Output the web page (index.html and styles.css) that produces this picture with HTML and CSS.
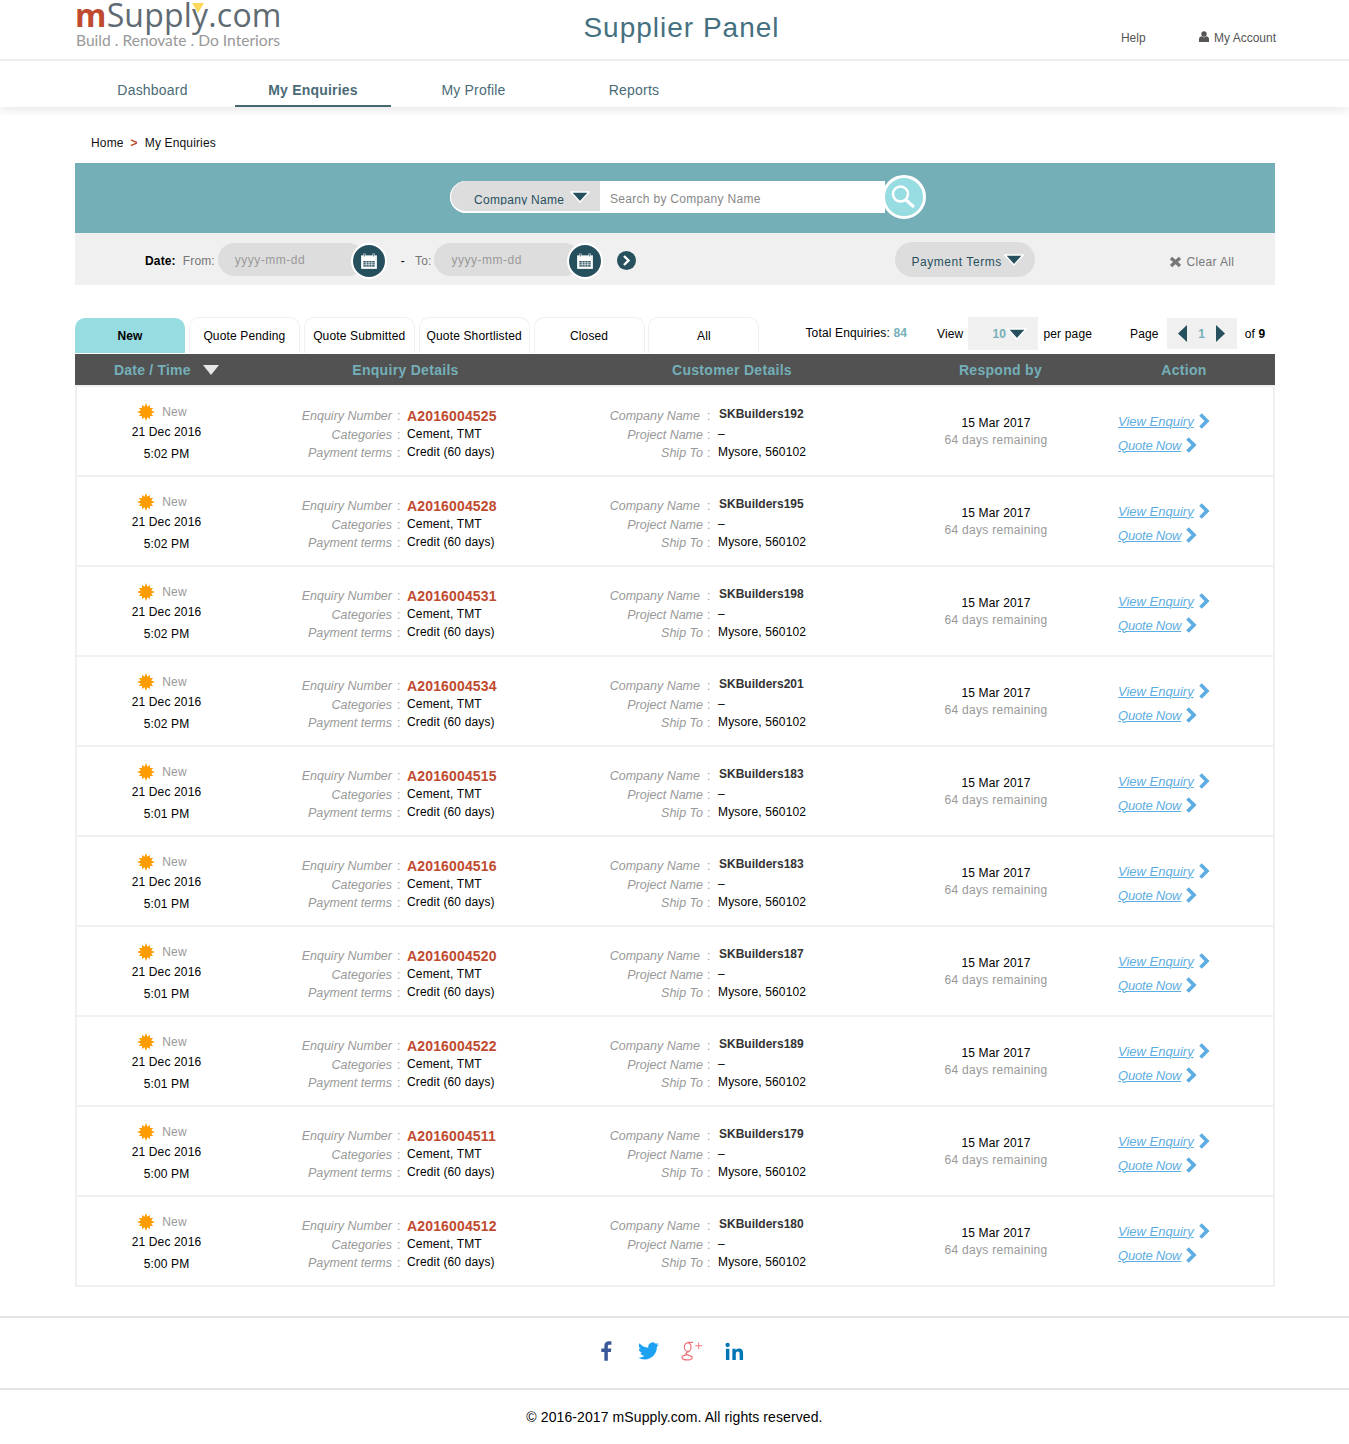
FILE: index.html
```html
<!DOCTYPE html>
<html lang="en">
<head>
    <meta charset="UTF-8">
    <title>Supplier Panel</title>
    <link rel="stylesheet" href="styles.css">
</head>
<body>

<!-- Shared icons -->
<svg class="icon-defs" width="0" height="0" aria-hidden="true">
    <symbol id="sun" viewBox="0 0 18 18">
        <polygon points="9,0 10.4,3.8 13,1.9 13,5 16.1,5 14.2,7.6 18,9 14.2,10.4 16.1,13 13,13 13,16.1 10.4,14.2 9,18 7.6,14.2 5,16.1 5,13 1.9,13 3.8,10.4 0,9 3.8,7.6 1.9,5 5,5 5,1.9 7.6,3.8" fill="#ff9c00"/>
    </symbol>
    <symbol id="chevron" viewBox="0 0 12 16">
        <polyline points="2.5,1.5 9,8 2.5,14.5" fill="none" stroke="#5dade2" stroke-width="3.6"/>
    </symbol>
    <symbol id="calendar" viewBox="0 0 16 16">
        <path d="M1 3h14v12H1z" fill="#fff"/>
        <path d="M4 1v4M12 1v4" stroke="#fff" stroke-width="1.6"/>
        <path d="M4 1v3M12 1v3" stroke="#27505e" stroke-width=".6"/>
        <path d="M3 8h10v5H3z" fill="#27505e"/>
        <path d="M3 9.6h10M3 11.3h10M5.5 8v5M8 8v5M10.5 8v5" stroke="#fff" stroke-width=".6"/>
    </symbol>
    <symbol id="caret" viewBox="0 0 20 12">
        <polygon points="1,1 19,1 10,11" fill="#27505e" stroke="#fff" stroke-width="1.4"/>
    </symbol>
</svg>

<!-- Header -->
<header class="top">
    <div class="logo">
        <div class="logo-name"><span class="logo-m">m</span>Supply.com</div>
        <div class="logo-tag">Build . Renovate . Do Interiors</div>
        <i class="logo-mark"></i>
    </div>
    <h1 class="panel-title">Supplier Panel</h1>
    <div class="top-links">
        <a class="help">Help</a>
        <a class="account">
            <svg width="10" height="11" viewBox="0 0 10 11"><circle cx="5" cy="3" r="2.7" fill="#555"/><path d="M0 11V8c0-1.6 1.4-2.6 3-2.8l2 1.2 2-1.2c1.600.2 3 1.200 3 2.800v3z" fill="#555"/></svg>
            My Account
        </a>
    </div>
</header>

<nav class="nav">
    <a class="nav-item">Dashboard</a>
    <a class="nav-item active">My Enquiries</a>
    <a class="nav-item">My Profile</a>
    <a class="nav-item">Reports</a>
</nav>

<div class="breadcrumb">Home <span class="crumb-sep">&gt;</span> My Enquiries</div>

<main class="content">

    <!-- Search -->
    <section class="search-band">
        <div class="search-box">
            <div class="search-type">
                <span class="search-type-text">Company Name</span>
                <svg class="caret"><use href="#caret"/></svg>
            </div>
            <div class="search-input">Search by Company Name</div>
            <div class="search-btn">
                <svg width="28" height="28" viewBox="0 0 28 28"><circle cx="12.5" cy="13" r="7.5" fill="none" stroke="#fff" stroke-width="2.5"/><path d="M18 19l8 7" stroke="#fff" stroke-width="3"/></svg>
            </div>
        </div>
    </section>

    <!-- Filters -->
    <section class="filter-band">
        <b class="date-label">Date:</b>
        <span class="from-label">From:</span>
        <div class="date-pill">yyyy-mm-dd<span class="cal"><svg width="18" height="18"><use href="#calendar"/></svg></span></div>
        <span class="dash">-</span>
        <span class="to-label">To:</span>
        <div class="date-pill">yyyy-mm-dd<span class="cal"><svg width="18" height="18"><use href="#calendar"/></svg></span></div>
        <span class="go-btn"><svg width="9" height="11" viewBox="0 0 9 11"><polyline points="2,1 6.500,5.500 2,10" fill="none" stroke="#fff" stroke-width="2.400"/></svg></span>
        <div class="terms-pill">Payment Terms<svg class="caret"><use href="#caret"/></svg></div>
        <div class="clear-all">
            <svg width="13" height="12" viewBox="0 0 13 12"><path d="M2 2l9 8M11 2l-9 8" stroke="#777" stroke-width="3.200"/></svg>
            Clear All
        </div>
    </section>

    <!-- Tabs and paging -->
    <section class="tab-bar">
        <a class="tab current">New</a>
        <a class="tab">Quote Pending</a>
        <a class="tab">Quote Submitted</a>
        <a class="tab">Quote Shortlisted</a>
        <a class="tab">Closed</a>
        <a class="tab">All</a>
        <div class="total">Total Enquiries: <span class="total-num">84</span></div>
        <div class="view-label">View</div>
        <div class="view-select"><span>10</span><svg class="caret"><use href="#caret"/></svg></div>
        <div class="per-page">per page</div>
        <div class="page-label">Page</div>
        <div class="pager">
            <svg width="9" height="17" viewBox="0 0 9 17"><polygon points="9,0 9,17 0,8.500" fill="#27505e"/></svg>
            <span>1</span>
            <svg width="9" height="17" viewBox="0 0 9 17"><polygon points="0,0 0,17 9,8.500" fill="#27505e"/></svg>
        </div>
        <div class="page-of">of <b>9</b></div>
    </section>

    <!-- Enquiries -->
    <div class="table-head">
        <div class="th th-date">Date / Time <svg width="16" height="10" viewBox="0 0 16 10"><polygon points="0,0 16,0 8,10" fill="#e8e8e8"/></svg></div>
        <div class="th">Enquiry Details</div>
        <div class="th">Customer Details</div>
        <div class="th">Respond by</div>
        <div class="th">Action</div>
    </div>

    <div class="table-body">
        <div class="row">
            <div class="when"><div class="status"><svg width="18" height="18"><use href="#sun"/></svg><span>New</span></div><div class="date">21 Dec 2016</div><div class="time">5:02 PM</div></div>
            <div class="details enquiry"><span class="label">Enquiry Number</span><span class="colon">:</span><b class="number">A2016004525</b><span class="label">Categories</span><span class="colon">:</span><span class="value">Cement, TMT</span><span class="label">Payment terms</span><span class="colon">:</span><span class="value">Credit (60 days)</span></div>
            <div class="details customer"><span class="label">Company Name</span><span class="colon">:</span><b class="company">SKBuilders192</b><span class="label">Project Name</span><span class="colon">:</span><span class="value">–</span><span class="label">Ship To</span><span class="colon">:</span><span class="value">Mysore, 560102</span></div>
            <div class="respond"><div class="respond-date">15 Mar 2017</div><div class="respond-left">64 days remaining</div></div>
            <div class="actions"><div class="action"><a>View Enquiry</a><svg width="12" height="16"><use href="#chevron"/></svg></div><div class="action"><a>Quote Now</a><svg width="12" height="16"><use href="#chevron"/></svg></div></div>
        </div>
        <div class="row">
            <div class="when"><div class="status"><svg width="18" height="18"><use href="#sun"/></svg><span>New</span></div><div class="date">21 Dec 2016</div><div class="time">5:02 PM</div></div>
            <div class="details enquiry"><span class="label">Enquiry Number</span><span class="colon">:</span><b class="number">A2016004528</b><span class="label">Categories</span><span class="colon">:</span><span class="value">Cement, TMT</span><span class="label">Payment terms</span><span class="colon">:</span><span class="value">Credit (60 days)</span></div>
            <div class="details customer"><span class="label">Company Name</span><span class="colon">:</span><b class="company">SKBuilders195</b><span class="label">Project Name</span><span class="colon">:</span><span class="value">–</span><span class="label">Ship To</span><span class="colon">:</span><span class="value">Mysore, 560102</span></div>
            <div class="respond"><div class="respond-date">15 Mar 2017</div><div class="respond-left">64 days remaining</div></div>
            <div class="actions"><div class="action"><a>View Enquiry</a><svg width="12" height="16"><use href="#chevron"/></svg></div><div class="action"><a>Quote Now</a><svg width="12" height="16"><use href="#chevron"/></svg></div></div>
        </div>
        <div class="row">
            <div class="when"><div class="status"><svg width="18" height="18"><use href="#sun"/></svg><span>New</span></div><div class="date">21 Dec 2016</div><div class="time">5:02 PM</div></div>
            <div class="details enquiry"><span class="label">Enquiry Number</span><span class="colon">:</span><b class="number">A2016004531</b><span class="label">Categories</span><span class="colon">:</span><span class="value">Cement, TMT</span><span class="label">Payment terms</span><span class="colon">:</span><span class="value">Credit (60 days)</span></div>
            <div class="details customer"><span class="label">Company Name</span><span class="colon">:</span><b class="company">SKBuilders198</b><span class="label">Project Name</span><span class="colon">:</span><span class="value">–</span><span class="label">Ship To</span><span class="colon">:</span><span class="value">Mysore, 560102</span></div>
            <div class="respond"><div class="respond-date">15 Mar 2017</div><div class="respond-left">64 days remaining</div></div>
            <div class="actions"><div class="action"><a>View Enquiry</a><svg width="12" height="16"><use href="#chevron"/></svg></div><div class="action"><a>Quote Now</a><svg width="12" height="16"><use href="#chevron"/></svg></div></div>
        </div>
        <div class="row">
            <div class="when"><div class="status"><svg width="18" height="18"><use href="#sun"/></svg><span>New</span></div><div class="date">21 Dec 2016</div><div class="time">5:02 PM</div></div>
            <div class="details enquiry"><span class="label">Enquiry Number</span><span class="colon">:</span><b class="number">A2016004534</b><span class="label">Categories</span><span class="colon">:</span><span class="value">Cement, TMT</span><span class="label">Payment terms</span><span class="colon">:</span><span class="value">Credit (60 days)</span></div>
            <div class="details customer"><span class="label">Company Name</span><span class="colon">:</span><b class="company">SKBuilders201</b><span class="label">Project Name</span><span class="colon">:</span><span class="value">–</span><span class="label">Ship To</span><span class="colon">:</span><span class="value">Mysore, 560102</span></div>
            <div class="respond"><div class="respond-date">15 Mar 2017</div><div class="respond-left">64 days remaining</div></div>
            <div class="actions"><div class="action"><a>View Enquiry</a><svg width="12" height="16"><use href="#chevron"/></svg></div><div class="action"><a>Quote Now</a><svg width="12" height="16"><use href="#chevron"/></svg></div></div>
        </div>
        <div class="row">
            <div class="when"><div class="status"><svg width="18" height="18"><use href="#sun"/></svg><span>New</span></div><div class="date">21 Dec 2016</div><div class="time">5:01 PM</div></div>
            <div class="details enquiry"><span class="label">Enquiry Number</span><span class="colon">:</span><b class="number">A2016004515</b><span class="label">Categories</span><span class="colon">:</span><span class="value">Cement, TMT</span><span class="label">Payment terms</span><span class="colon">:</span><span class="value">Credit (60 days)</span></div>
            <div class="details customer"><span class="label">Company Name</span><span class="colon">:</span><b class="company">SKBuilders183</b><span class="label">Project Name</span><span class="colon">:</span><span class="value">–</span><span class="label">Ship To</span><span class="colon">:</span><span class="value">Mysore, 560102</span></div>
            <div class="respond"><div class="respond-date">15 Mar 2017</div><div class="respond-left">64 days remaining</div></div>
            <div class="actions"><div class="action"><a>View Enquiry</a><svg width="12" height="16"><use href="#chevron"/></svg></div><div class="action"><a>Quote Now</a><svg width="12" height="16"><use href="#chevron"/></svg></div></div>
        </div>
        <div class="row">
            <div class="when"><div class="status"><svg width="18" height="18"><use href="#sun"/></svg><span>New</span></div><div class="date">21 Dec 2016</div><div class="time">5:01 PM</div></div>
            <div class="details enquiry"><span class="label">Enquiry Number</span><span class="colon">:</span><b class="number">A2016004516</b><span class="label">Categories</span><span class="colon">:</span><span class="value">Cement, TMT</span><span class="label">Payment terms</span><span class="colon">:</span><span class="value">Credit (60 days)</span></div>
            <div class="details customer"><span class="label">Company Name</span><span class="colon">:</span><b class="company">SKBuilders183</b><span class="label">Project Name</span><span class="colon">:</span><span class="value">–</span><span class="label">Ship To</span><span class="colon">:</span><span class="value">Mysore, 560102</span></div>
            <div class="respond"><div class="respond-date">15 Mar 2017</div><div class="respond-left">64 days remaining</div></div>
            <div class="actions"><div class="action"><a>View Enquiry</a><svg width="12" height="16"><use href="#chevron"/></svg></div><div class="action"><a>Quote Now</a><svg width="12" height="16"><use href="#chevron"/></svg></div></div>
        </div>
        <div class="row">
            <div class="when"><div class="status"><svg width="18" height="18"><use href="#sun"/></svg><span>New</span></div><div class="date">21 Dec 2016</div><div class="time">5:01 PM</div></div>
            <div class="details enquiry"><span class="label">Enquiry Number</span><span class="colon">:</span><b class="number">A2016004520</b><span class="label">Categories</span><span class="colon">:</span><span class="value">Cement, TMT</span><span class="label">Payment terms</span><span class="colon">:</span><span class="value">Credit (60 days)</span></div>
            <div class="details customer"><span class="label">Company Name</span><span class="colon">:</span><b class="company">SKBuilders187</b><span class="label">Project Name</span><span class="colon">:</span><span class="value">–</span><span class="label">Ship To</span><span class="colon">:</span><span class="value">Mysore, 560102</span></div>
            <div class="respond"><div class="respond-date">15 Mar 2017</div><div class="respond-left">64 days remaining</div></div>
            <div class="actions"><div class="action"><a>View Enquiry</a><svg width="12" height="16"><use href="#chevron"/></svg></div><div class="action"><a>Quote Now</a><svg width="12" height="16"><use href="#chevron"/></svg></div></div>
        </div>
        <div class="row">
            <div class="when"><div class="status"><svg width="18" height="18"><use href="#sun"/></svg><span>New</span></div><div class="date">21 Dec 2016</div><div class="time">5:01 PM</div></div>
            <div class="details enquiry"><span class="label">Enquiry Number</span><span class="colon">:</span><b class="number">A2016004522</b><span class="label">Categories</span><span class="colon">:</span><span class="value">Cement, TMT</span><span class="label">Payment terms</span><span class="colon">:</span><span class="value">Credit (60 days)</span></div>
            <div class="details customer"><span class="label">Company Name</span><span class="colon">:</span><b class="company">SKBuilders189</b><span class="label">Project Name</span><span class="colon">:</span><span class="value">–</span><span class="label">Ship To</span><span class="colon">:</span><span class="value">Mysore, 560102</span></div>
            <div class="respond"><div class="respond-date">15 Mar 2017</div><div class="respond-left">64 days remaining</div></div>
            <div class="actions"><div class="action"><a>View Enquiry</a><svg width="12" height="16"><use href="#chevron"/></svg></div><div class="action"><a>Quote Now</a><svg width="12" height="16"><use href="#chevron"/></svg></div></div>
        </div>
        <div class="row">
            <div class="when"><div class="status"><svg width="18" height="18"><use href="#sun"/></svg><span>New</span></div><div class="date">21 Dec 2016</div><div class="time">5:00 PM</div></div>
            <div class="details enquiry"><span class="label">Enquiry Number</span><span class="colon">:</span><b class="number">A2016004511</b><span class="label">Categories</span><span class="colon">:</span><span class="value">Cement, TMT</span><span class="label">Payment terms</span><span class="colon">:</span><span class="value">Credit (60 days)</span></div>
            <div class="details customer"><span class="label">Company Name</span><span class="colon">:</span><b class="company">SKBuilders179</b><span class="label">Project Name</span><span class="colon">:</span><span class="value">–</span><span class="label">Ship To</span><span class="colon">:</span><span class="value">Mysore, 560102</span></div>
            <div class="respond"><div class="respond-date">15 Mar 2017</div><div class="respond-left">64 days remaining</div></div>
            <div class="actions"><div class="action"><a>View Enquiry</a><svg width="12" height="16"><use href="#chevron"/></svg></div><div class="action"><a>Quote Now</a><svg width="12" height="16"><use href="#chevron"/></svg></div></div>
        </div>
        <div class="row">
            <div class="when"><div class="status"><svg width="18" height="18"><use href="#sun"/></svg><span>New</span></div><div class="date">21 Dec 2016</div><div class="time">5:00 PM</div></div>
            <div class="details enquiry"><span class="label">Enquiry Number</span><span class="colon">:</span><b class="number">A2016004512</b><span class="label">Categories</span><span class="colon">:</span><span class="value">Cement, TMT</span><span class="label">Payment terms</span><span class="colon">:</span><span class="value">Credit (60 days)</span></div>
            <div class="details customer"><span class="label">Company Name</span><span class="colon">:</span><b class="company">SKBuilders180</b><span class="label">Project Name</span><span class="colon">:</span><span class="value">–</span><span class="label">Ship To</span><span class="colon">:</span><span class="value">Mysore, 560102</span></div>
            <div class="respond"><div class="respond-date">15 Mar 2017</div><div class="respond-left">64 days remaining</div></div>
            <div class="actions"><div class="action"><a>View Enquiry</a><svg width="12" height="16"><use href="#chevron"/></svg></div><div class="action"><a>Quote Now</a><svg width="12" height="16"><use href="#chevron"/></svg></div></div>
        </div>
    </div>
</main>

<!-- Footer -->
<footer class="footer">
    <div class="social">
        <svg width="12" height="20" viewBox="0 0 13 21"><path d="M8.500 21V11.500h3.300l.5-3.800H8.500V5.400c0-1.100.3-1.800 1.900-1.800h2V.2C12 .1 10.900 0 9.600 0 6.700 0 4.700 1.700 4.700 5v2.700H1.400v3.800h3.300V21z" fill="#3b5998"/></svg>
        <svg width="21" height="18" viewBox="0 0 24 20"><path transform="translate(0 -2)" d="M23.953 4.570a10 10 0 01-2.825.775 4.958 4.958 0 002.163-2.723c-.951.555-2.005.959-3.127 1.184a4.920 4.920 0 00-8.384 4.482C7.690 8.095 4.067 6.130 1.640 3.162a4.822 4.822 0 00-.666 2.475c0 1.710.870 3.213 2.188 4.096a4.904 4.904 0 01-2.228-.616v.060a4.923 4.923 0 003.946 4.827 4.996 4.996 0 01-2.212.085 4.936 4.936 0 004.604 3.417 9.867 9.867 0 01-6.102 2.105c-.390 0-.779-.023-1.170-.067a13.995 13.995 0 007.557 2.209c9.053 0 13.998-7.496 13.998-13.985 0-.210 0-.420-.015-.630A9.935 9.935 0 0024 4.590z" fill="#1da1f2"/></svg>
        <svg width="22" height="20" viewBox="0 0 23 21"><g fill="none" stroke="#f0727a" stroke-width="1.300"><ellipse cx="7" cy="6.500" rx="3.500" ry="4.500"/><path d="M7 1.500h5.500M9 11c-2 .4-4 1-3.800 2.500.2 1.300 6.500 1.500 6.500 3.700 0 3.400-10.700 3.600-10.700.4 0-1.800 2.500-3 5.500-3.100"/></g><path d="M15 5h7M18.500 1.500v7" stroke="#f0727a" stroke-width="1"/></svg>
        <svg width="19" height="18" viewBox="0 0 21 21"><path d="M4.980 3.500a2.500 2.500 0 11-5 0 2.500 2.500 0 015 0zM.5 8h4v13h-4zM8 8h3.800v1.800h.1c.5-1 1.800-2.100 3.800-2.100 4 0 4.800 2.600 4.800 6V21h-4v-6.400c0-1.500 0-3.500-2.100-3.500s-2.400 1.700-2.400 3.400V21H8z" fill="#0077b5"/></svg>
    </div>
    <div class="copyright">© 2016-2017 mSupply.com. All rights reserved.</div>
</footer>

</body>
</html>
```

FILE: styles.css
```css
body {
    margin: 0;
    font-family: "Liberation Sans", Arial, sans-serif;
    font-size: 12px;
    letter-spacing: 0.15px;
    color: #000;
    background-color: #fff;
}

.icon-defs {
    position: absolute;
}

/* Header */
.top {
    position: relative;
    height: 59px;
    border-bottom: 2px solid #eee;
    display: flex;
    letter-spacing: 0;
}

.logo {
    position: relative;
    margin-left: 75px;
    width: 210px;
}

.logo-name {
    font-family: "Open Sans", sans-serif;
    font-size: 32px;
    line-height: 30px;
    letter-spacing: 0.2px;
    color: #5f6b73;
    white-space: nowrap;
}

.logo-m {
    color: #bf4a30;
    font-weight: 700;
}

.logo-tag {
    font-family: Lato, sans-serif;
    font-size: 15.6px;
    line-height: 20px;
    padding-left: 1px;
    color: #999;
    white-space: nowrap;
}

.logo-mark {
    position: absolute;
    left: 117px;
    top: 3px;
    border-left: 6px solid transparent;
    border-right: 6px solid transparent;
    border-top: 10px solid #fdd85d;
}

.panel-title {
    margin: 0;
    position: absolute;
    left: 0;
    right: 0;
    top: 12px;
    padding-left: 14px;
    text-align: center;
    font-size: 28px;
    line-height: 32px;
    font-weight: 400;
    letter-spacing: 1px;
    color: #457080;
}

.top-links {
    margin-left: auto;
    padding: 31px 73px 0 0;
    display: flex;
    color: #555;
    line-height: 14px;
}

.help {
    margin-right: 53px;
}

.account svg {
    margin-right: 2px;
}

/* Navigation */
.nav {
    height: 46px;
    padding-left: 74.5px;
    display: flex;
    gap: 4.5px;
    box-shadow: 0 4px 8px rgba(0, 0, 0, 0.08);
    letter-spacing: 0.2px;
}

.nav-item {
    width: 156px;
    text-align: center;
    font-size: 14px;
    line-height: 58px;
    height: 46px;
    box-sizing: border-box;
    color: #4a6b76;
}

.nav-item.active {
    font-weight: 700;
    border-bottom: 2px solid #44696f;
}

.breadcrumb {
    padding: 29px 0 0 91px;
    line-height: 15px;
    height: 27px;
    color: #111;
}

.crumb-sep {
    color: #bf4a30;
    font-weight: 700;
    margin: 0 3.5px;
}

.content {
    margin: 0 74px 0 75px;
}

/* Search band */
.search-band {
    height: 70px;
    background-color: #74afb8;
    padding: 18px 0 0 375px;
    box-sizing: border-box;
}

.search-box {
    position: relative;
    display: flex;
    height: 32px;
    width: 435px;
    background-color: #fff;
    border-radius: 16px 0 0 16px;
}

.search-type {
    width: 150px;
    height: 32px;
    box-sizing: border-box;
    background-color: #ddd;
    border-radius: 16px 0 0 16px;
    border-bottom: 2px solid #fff;
    border-left: 1px solid #fff;
    display: flex;
    padding-left: 23px;
    color: #27505e;
}

/* the label is cut just under the baseline, as on the live page */
.search-type-text {
    height: 24px;
    overflow: hidden;
    line-height: 38px;
    letter-spacing: 0.3px;
    white-space: nowrap;
}

.search-type .caret {
    margin: 10px 0 0 6px;
    width: 20px;
    height: 12px;
}

.search-input {
    padding-left: 10px;
    line-height: 36px;
    color: #888;
    letter-spacing: 0.3px;
}

.search-btn {
    position: absolute;
    left: 432px;
    top: -6px;
    width: 44px;
    height: 44px;
    box-sizing: border-box;
    border: 3px solid #fff;
    border-radius: 50%;
    background-color: #96dce0;
    padding: 3px 0 0 3px;
}

/* Filter band */
.filter-band {
    height: 52px;
    box-sizing: border-box;
    background-color: #f0f0f0;
    display: flex;
    align-items: center;
    padding: 3px 0 0 70px;
}

.date-label {
    margin-right: 7px;
}

.from-label,
.to-label {
    color: #777;
    margin-right: 3px;
}

.date-pill {
    position: relative;
    width: 147px;
    height: 33px;
    margin-top: -3px;
    box-sizing: border-box;
    padding-left: 17px;
    line-height: 34px;
    border-radius: 17px;
    background-color: #ddd;
    color: #999;
    letter-spacing: 0.5px;
}

.cal {
    position: absolute;
    left: 133px;
    top: 0;
    width: 36px;
    height: 36px;
    box-sizing: border-box;
    border: 2px solid #fff;
    border-radius: 50%;
    background-color: #27505e;
    display: flex;
    align-items: center;
    justify-content: center;
}

.dash {
    margin: 0 10px 0 36px;
}

.go-btn {
    margin-left: 36px;
    width: 19px;
    height: 19px;
    border-radius: 50%;
    background-color: #27505e;
    display: flex;
    align-items: center;
    justify-content: center;
}

.terms-pill {
    margin: -2px 0 0 259px;
    width: 140px;
    height: 35px;
    box-sizing: border-box;
    border-radius: 18px;
    background-color: #ddd;
    padding: 4px 0 0 16px;
    display: flex;
    align-items: center;
    color: #27505e;
    letter-spacing: 0.55px;
}

.terms-pill .caret {
    width: 20px;
    height: 12px;
    margin: -3px 0 0 2px;
}

.clear-all {
    margin-left: 134px;
    padding-top: 2px;
    color: #777;
    display: flex;
    align-items: center;
    gap: 4px;
    letter-spacing: 0.35px;
}

/* Tabs */
.tab-bar {
    margin-top: 32px;
    height: 37px;
    display: flex;
    align-items: flex-start;
}

.tab {
    width: 111px;
    height: 36px;
    box-sizing: border-box;
    margin-right: 3.9px;
    border: 1px solid #f0f0f0;
    border-bottom: 0;
    border-radius: 10px 10px 0 0;
    text-align: center;
    line-height: 37px;
}

.tab:nth-child(6) {
    margin-right: 0;
}

.tab.current {
    width: 110px;
    height: 35px;
    margin-top: 1px;
    line-height: 35px;
    background-color: #96dce0;
    border-color: #96dce0;
    font-weight: 700;
}

.total {
    margin-left: 46px;
    line-height: 32px;
}

.total-num {
    color: #74afb8;
    font-weight: 700;
}

.view-label {
    margin-left: 30px;
    line-height: 34px;
}

.view-select {
    margin-left: 5px;
    width: 70px;
    height: 33px;
    box-sizing: border-box;
    padding-left: 24px;
    background-color: #f0f0f0;
    display: flex;
    align-items: center;
    color: #74afb8;
    font-weight: 700;
}

.view-select .caret {
    width: 20px;
    height: 12px;
    margin-left: 1px;
}

.per-page {
    margin-left: 5px;
    line-height: 34px;
}

.page-label {
    margin-left: 38px;
    line-height: 34px;
}

.pager {
    margin: 1px 0 0 8px;
    width: 70px;
    height: 31px;
    background-color: #f0f0f0;
    display: flex;
    align-items: center;
    justify-content: center;
    gap: 11px;
    color: #74afb8;
    font-weight: 700;
}

.page-of {
    margin-left: 8px;
    line-height: 34px;
}

/* Table */
.table-head {
    height: 31px;
    background-color: #525252;
    display: grid;
    grid-template-columns: 180px 301px 352px 185px 1fr;
    align-items: center;
}

.th {
    text-align: center;
    color: #74afb8;
    font-size: 14px;
    font-weight: 700;
    letter-spacing: 0.3px;
}

.th-date {
    text-align: left;
    padding-left: 39px;
    letter-spacing: 0.2px;
}

.th-date svg {
    margin-left: 8px;
}

.table-body {
    border: 2px solid #f0f0f0;
    border-bottom: 0;
}

.row {
    height: 88px;
    border-bottom: 2px solid #f0f0f0;
    display: grid;
    grid-template-columns: 179px 334px 316px 180px 1fr;
}

.when {
    text-align: center;
    padding-top: 15px;
}

.status {
    display: flex;
    align-items: center;
    justify-content: center;
    height: 20px;
    gap: 7px;
    color: #999;
    padding-right: 9px;
}

.date {
    line-height: 20px;
    letter-spacing: 0.15px;
}

.time {
    line-height: 24px;
}

.details {
    display: grid;
    grid-template-columns: 136px 15px 1fr;
    grid-auto-rows: 18.5px;
    align-content: start;
    line-height: 19px;
}

.enquiry {
    padding-top: 20px;
}

.customer {
    padding-top: 20px;
    grid-template-columns: 110px 18px 1fr;
}

.label {
    text-align: right;
    font-size: 12.5px;
    font-style: italic;
    letter-spacing: 0;
    color: #999;
}

/* second and third customer labels sit closer to their colon */
.customer .label:nth-child(4),
.customer .label:nth-child(7) {
    margin-right: -3px;
}

.colon {
    color: #999;
    padding-left: 5px;
}

.customer .colon {
    padding-left: 7px;
}

.value {
    margin-top: -1px;
}

.number {
    font-size: 14px;
    color: #bf4a30;
}

.company {
    margin: -2px 0 0 1px;
    letter-spacing: 0;
    color: #333;
}

.respond {
    text-align: center;
    padding-top: 28px;
    line-height: 17px;
}

.respond-left {
    color: #999;
    letter-spacing: 0.3px;
}

.actions {
    padding: 22px 0 0 32px;
}

.action {
    height: 24px;
    display: flex;
    align-items: center;
    gap: 4px;
}

.action a {
    font-size: 13px;
    font-style: italic;
    letter-spacing: 0;
    color: #5dade2;
    text-decoration: underline;
}

.action:last-child a {
    letter-spacing: -0.2px;
}

/* Footer */
.footer {
    margin-top: 29px;
    border-top: 2px solid #e5e5e5;
}

.social {
    height: 72px;
    box-sizing: border-box;
    padding: 0 6px 4px 0;
    display: flex;
    align-items: center;
    justify-content: center;
    gap: 22px;
    border-bottom: 2px solid #e5e5e5;
}

.social svg:first-child {
    margin-right: 4px;
}

.copyright {
    text-align: center;
    font-size: 14px;
    line-height: 54px;
    height: 52px;
    letter-spacing: 0.1px;
}
```
